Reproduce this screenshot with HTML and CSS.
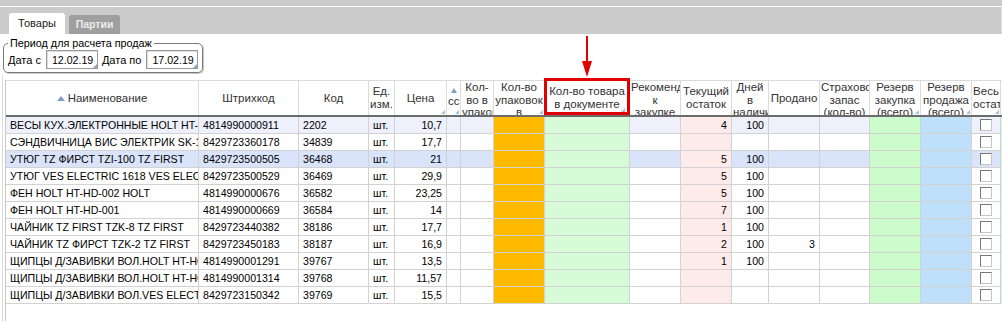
FILE: index.html
```html
<!DOCTYPE html>
<html>
<head>
    <title>Товары</title>
    <link rel="stylesheet" href="styles.css">
</head>
<body>
    <div class="topline"></div>
    <div class="tabs">
        <div class="tab active">Товары</div>
        <div class="tab">Партии</div>
    </div>

    <fieldset class="period">
        <legend>Период для расчета продаж</legend>
        <label class="lbl">Дата с</label>
        <span class="date"><input type="text" value="12.02.19"></span>
        <label class="lbl">Дата по</label>
        <span class="date"><input type="text" value="17.02.19"></span>
    </fieldset>

    <!-- pointer to the column -->
    <svg class="arrow" width="12" height="42" viewBox="0 0 12 42">
        <line x1="6" y1="0" x2="6" y2="28" stroke="#e00000" stroke-width="2"/>
        <polygon points="1,25 11,25 6,41" fill="#e00000"/>
    </svg>

    <div class="panel">
        <div class="grid">
            <div class="row head">
                <div><div class="in"><span class="sort"></span>Наименование</div></div>
                <div><div class="in">Штрихкод</div></div>
                <div><div class="in">Код</div></div>
                <div><div class="in">Ед. изм.</div></div>
                <div class="rz"><div class="in">Цена</div></div>
                <div class="rz"><div class="in"><span class="sort blk"></span>сс</div></div>
                <div class="rz"><div class="in">Кол-во в упаковке</div></div>
                <div class="rz"><div class="in">Кол-во упаковок в документе</div></div>
                <div class="rz doc"><div class="in">Кол-во товара в документе</div></div>
                <div><div class="in">Рекомендуемое<br>к<br>закупке</div></div>
                <div><div class="in">Текущий остаток</div></div>
                <div><div class="in">Дней в наличии</div></div>
                <div><div class="in">Продано</div></div>
                <div><div class="in">Страховой запас (кол-во)</div></div>
                <div class="rz"><div class="in">Резерв закупка (всего)</div></div>
                <div class="rz"><div class="in">Резерв продажа (всего)</div></div>
                <div class="rz"><div class="in">Весь остаток</div></div>
                <div></div>
            </div>

            <div class="row hov">
                <div>ВЕСЫ КУХ.ЭЛЕКТРОННЫЕ HOLT HT-KS-001</div><div>4814990000911</div><div>2202</div><div>шт.</div><div class="r">10,7</div>
                <div></div><div></div><div class="or"></div><div class="g1"></div><div></div>
                <div class="pk r">4</div><div class="r">100</div><div class="r"></div><div></div>
                <div class="g2"></div><div class="bl"></div><div class="ck"><span class="box"></span></div><div class="g1"></div>
            </div>
            <div class="row">
                <div>СЭНДВИЧНИЦА ВИС ЭЛЕКТРИК SK-1201</div><div>8429723360178</div><div>34839</div><div>шт.</div><div class="r">17,7</div>
                <div></div><div></div><div class="or"></div><div class="g1"></div><div></div>
                <div class="pk r"></div><div class="r"></div><div class="r"></div><div></div>
                <div class="g2"></div><div class="bl"></div><div class="ck"><span class="box"></span></div><div class="g1"></div>
            </div>
            <div class="row sel">
                <div>УТЮГ TZ ФИРСТ TZI-100 TZ FIRST</div><div>8429723500505</div><div>36468</div><div>шт.</div><div class="r">21</div>
                <div></div><div></div><div class="or"></div><div class="g1"></div><div></div>
                <div class="pk r">5</div><div class="r">100</div><div class="r"></div><div></div>
                <div class="g2"></div><div class="bl"></div><div class="ck"><span class="box"></span></div><div class="g1"></div>
            </div>
            <div class="row">
                <div>УТЮГ VES ELECTRIC 1618 VES ELECTRIC</div><div>8429723500529</div><div>36469</div><div>шт.</div><div class="r">29,9</div>
                <div></div><div></div><div class="or"></div><div class="g1"></div><div></div>
                <div class="pk r">5</div><div class="r">100</div><div class="r"></div><div></div>
                <div class="g2"></div><div class="bl"></div><div class="ck"><span class="box"></span></div><div class="g1"></div>
            </div>
            <div class="row">
                <div>ФЕН HOLT HT-HD-002 HOLT</div><div>4814990000676</div><div>36582</div><div>шт.</div><div class="r">23,25</div>
                <div></div><div></div><div class="or"></div><div class="g1"></div><div></div>
                <div class="pk r">5</div><div class="r">100</div><div class="r"></div><div></div>
                <div class="g2"></div><div class="bl"></div><div class="ck"><span class="box"></span></div><div class="g1"></div>
            </div>
            <div class="row">
                <div>ФЕН HOLT HT-HD-001</div><div>4814990000669</div><div>36584</div><div>шт.</div><div class="r">14</div>
                <div></div><div></div><div class="or"></div><div class="g1"></div><div></div>
                <div class="pk r">7</div><div class="r">100</div><div class="r"></div><div></div>
                <div class="g2"></div><div class="bl"></div><div class="ck"><span class="box"></span></div><div class="g1"></div>
            </div>
            <div class="row">
                <div>ЧАЙНИК TZ FIRST TZK-8 TZ FIRST</div><div>8429723440382</div><div>38186</div><div>шт.</div><div class="r">17,7</div>
                <div></div><div></div><div class="or"></div><div class="g1"></div><div></div>
                <div class="pk r">1</div><div class="r">100</div><div class="r"></div><div></div>
                <div class="g2"></div><div class="bl"></div><div class="ck"><span class="box"></span></div><div class="g1"></div>
            </div>
            <div class="row">
                <div>ЧАЙНИК TZ ФИРСТ TZK-2 TZ FIRST</div><div>8429723450183</div><div>38187</div><div>шт.</div><div class="r">16,9</div>
                <div></div><div></div><div class="or"></div><div class="g1"></div><div></div>
                <div class="pk r">2</div><div class="r">100</div><div class="r">3</div><div></div>
                <div class="g2"></div><div class="bl"></div><div class="ck"><span class="box"></span></div><div class="g1"></div>
            </div>
            <div class="row">
                <div>ЩИПЦЫ Д/ЗАВИВКИ ВОЛ.HOLT HT-HC-001</div><div>4814990001291</div><div>39767</div><div>шт.</div><div class="r">13,5</div>
                <div></div><div></div><div class="or"></div><div class="g1"></div><div></div>
                <div class="pk r">1</div><div class="r">100</div><div class="r"></div><div></div>
                <div class="g2"></div><div class="bl"></div><div class="ck"><span class="box"></span></div><div class="g1"></div>
            </div>
            <div class="row">
                <div>ЩИПЦЫ Д/ЗАВИВКИ ВОЛ.HOLT HT-HC-002</div><div>4814990001314</div><div>39768</div><div>шт.</div><div class="r">11,57</div>
                <div></div><div></div><div class="or"></div><div class="g1"></div><div></div>
                <div class="pk r"></div><div class="r"></div><div class="r"></div><div></div>
                <div class="g2"></div><div class="bl"></div><div class="ck"><span class="box"></span></div><div class="g1"></div>
            </div>
            <div class="row">
                <div>ЩИПЦЫ Д/ЗАВИВКИ ВОЛ.VES ELECTRIC</div><div>8429723150342</div><div>39769</div><div>шт.</div><div class="r">15,5</div>
                <div></div><div></div><div class="or"></div><div class="g1"></div><div></div>
                <div class="pk r"></div><div class="r"></div><div class="r"></div><div></div>
                <div class="g2"></div><div class="bl"></div><div class="ck"><span class="box"></span></div><div class="g1"></div>
            </div>
        </div>
    </div>
</body>
</html>
```

FILE: styles.css
```css
html, body {
    margin: 0;
    padding: 0;
    height: 100%;
    overflow: hidden;
}

body {
    font-family: "Liberation Sans", Arial, sans-serif;
    font-size: 11px;
    color: #000;
    background-color: #fff;
}

/* top strip + tabs */
.topline {
    height: 6px;
    background-color: #cbcbcb;
    margin-bottom: 1px;
}

.tabs {
    height: 27px;
    box-sizing: border-box;
    background-color: #cbcbcb;
    border-right: 1px solid #dedede;
    display: flex;
    align-items: flex-end;
    gap: 4px;
    padding-left: 9px;
}

.tab {
    width: 51px;
    height: 19px;
    line-height: 19px;
    text-align: center;
    background-color: #9f9f9f;
    color: #ececec;
    font-weight: bold;
    font-size: 10.5px;
    border-radius: 3px 3px 0 0;
}

.tab.active {
    width: 56px;
    height: 21px;
    line-height: 21px;
    background-color: #fff;
    color: #222;
    font-weight: normal;
    font-size: 11px;
}

/* period box */
.period {
    width: fit-content;
    margin: 3px 0 0 3px;
    padding: 1px 4px 3px 4px;
    border: 1px solid #7a7a7a;
    border-radius: 5px;
    box-shadow: 1px 1px 0 #c8c8c8;
    display: flex;
    align-items: center;
}

.period legend {
    padding: 0 2px;
    font-size: 10.8px;
}

.lbl {
    margin-right: 5px;
}

.date {
    position: relative;
    display: inline-block;
    margin-right: 4px;
}

.date:last-child {
    margin-right: 0;
}

.date input {
    display: block;
    width: 52px;
    height: 19px;
    box-sizing: border-box;
    padding: 0 0 0 5px;
    border: 1px solid #9a9a9a;
    box-shadow: inset 1px 1px 1px rgba(0, 0, 0, 0.15);
    font-family: "Liberation Sans", Arial, sans-serif;
    font-size: 10.6px;
    color: #000;
}

.date::after {
    content: "";
    position: absolute;
    right: 1px;
    bottom: 1px;
    border-left: 4px solid transparent;
    border-bottom: 4px solid #7ea6d0;
}

.arrow {
    position: absolute;
    left: 581px;
    top: 36px;
}

/* grid */
.panel {
    margin: 2px 0 0 2px;
    padding: 5px 0 0 2px;
    border-left: 1px solid #dcdcdc;
    height: calc(100vh - 76px);
    box-sizing: border-box;
    overflow: hidden;
    display: flex;
}

.grid {
    flex: none;
    width: 1100px;
    border-left: 1px solid #c8c8c8;
}

.row {
    display: grid;
    grid-template-columns: 193px 100px 70px 26px 52px 14px 33px 51px 85px 51px 51px 37px 51px 50px 51px 51px 29px 60px;
    font-size: 10.6px;
}

.row > div {
    box-sizing: border-box;
    height: 17px;
    padding: 0 4px;
    line-height: 16px;
    border-right: 1px solid #d2d2d2;
    border-bottom: 1px solid #d2d2d2;
    white-space: nowrap;
    overflow: hidden;
}

.row.hov {
    background-color: #eef0fb;
}

.row.sel {
    background-color: #d9e4fb;
}

.r {
    text-align: right;
}

.or { background-color: #ffba00; }
.g1 { background-color: #d6fbd6; }
.pk { background-color: #fdeaea; }
.g2 { background-color: #ccfccc; }
.bl { background-color: #bee0fb; }

.row > .ck {
    padding: 0;
    display: flex;
    align-items: center;
    justify-content: center;
}

.box {
    width: 12px;
    height: 12px;
    box-sizing: border-box;
    border: 1px solid;
    border-color: #777 #c6c6c6 #c6c6c6 #777;
    background-color: #fff;
}

/* header */
.head {
    border-top: 1px solid #dadada;
    border-bottom: 2px solid #6b6b6b;
    background-color: #fff;
    font-size: 11.5px;
}

.head > div {
    height: 34px;
    padding: 0 1px;
    border-bottom: 0;
    border-right-color: #dcdcdc;
    display: flex;
    position: relative;
    white-space: normal;
    line-height: 12.6px;
    color: #333;
}

.head .in {
    margin: auto 0;
    width: 100%;
    text-align: center;
}

.sort {
    display: inline-block;
    width: 0;
    height: 0;
    border-left: 4px solid transparent;
    border-right: 4px solid transparent;
    border-bottom: 5px solid #7f9fc6;
    margin-right: 3px;
    vertical-align: 1px;
}

.sort.blk {
    display: block;
    margin: 0 auto 2px;
    border-left-width: 3px;
    border-right-width: 3px;
}

.rz::after {
    content: "";
    position: absolute;
    right: 1px;
    bottom: 1px;
    border-left: 4px solid transparent;
    border-bottom: 4px solid #a8bdd3;
}

.head > .doc {
    overflow: visible;
}

.doc::before {
    content: "";
    position: absolute;
    left: -1px;
    right: -1px;
    top: -3px;
    bottom: 0;
    border: 3px solid #e10000;
}

.doc::after {
    right: 4px;
    bottom: 3px;
}
```
